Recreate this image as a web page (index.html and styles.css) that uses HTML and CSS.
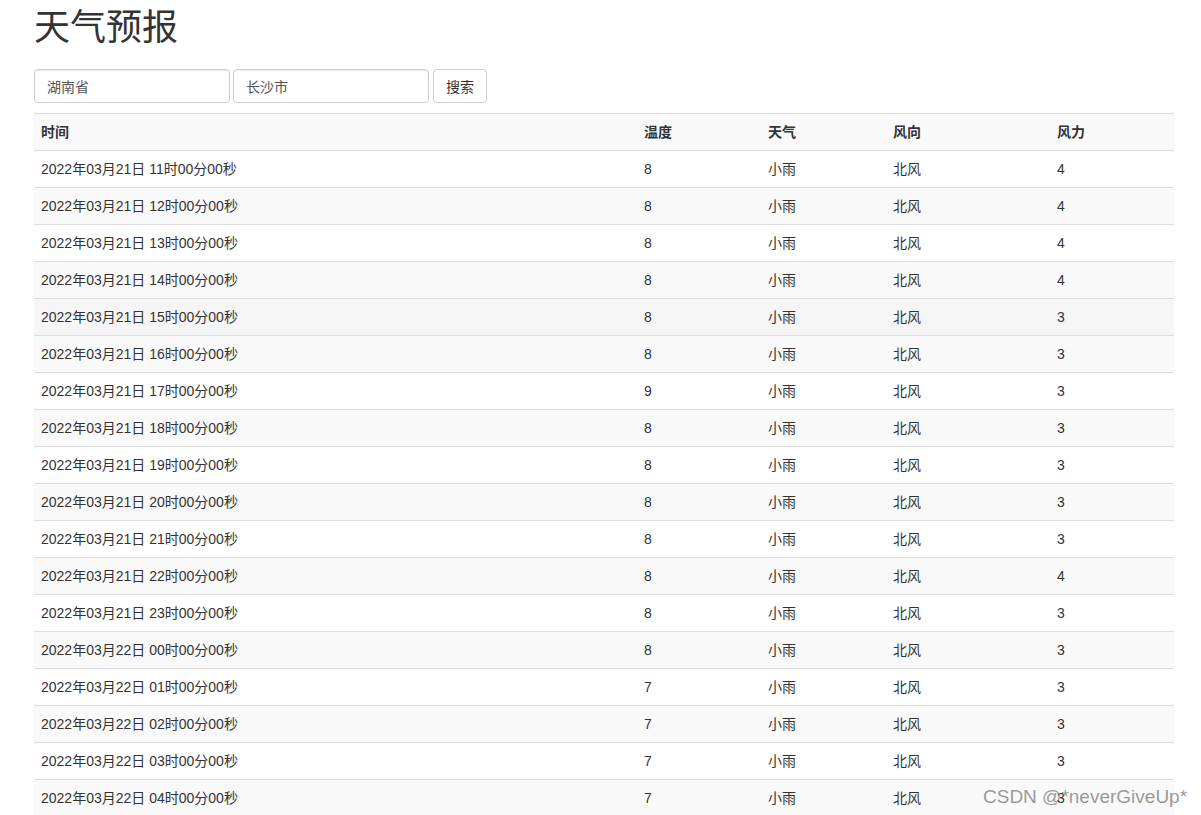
FILE: index.html
```html
<!DOCTYPE html>
<html lang="zh">
<head>
<meta charset="utf-8">
<title>天气预报</title>
<link rel="stylesheet" href="styles.css">
</head>
<body>
<div class="container">
  <h1 class="title">天气预报</h1>
  <div class="search">
    <input class="field" type="text" value="湖南省">
    <input class="field" type="text" value="长沙市">
    <button class="btn" type="button">搜索</button>
  </div>
  <table class="table">
    <colgroup>
      <col class="c-time"><col class="c-temp"><col class="c-weather"><col class="c-dir"><col class="c-power">
    </colgroup>
    <tbody>
      <tr class="head"><th>时间</th><th>温度</th><th>天气</th><th>风向</th><th>风力</th></tr>
      <tr><td>2022年03月21日 11时00分00秒</td><td>8</td><td>小雨</td><td>北风</td><td>4</td></tr>
      <tr><td>2022年03月21日 12时00分00秒</td><td>8</td><td>小雨</td><td>北风</td><td>4</td></tr>
      <tr><td>2022年03月21日 13时00分00秒</td><td>8</td><td>小雨</td><td>北风</td><td>4</td></tr>
      <tr><td>2022年03月21日 14时00分00秒</td><td>8</td><td>小雨</td><td>北风</td><td>4</td></tr>
      <tr class="hover"><td>2022年03月21日 15时00分00秒</td><td>8</td><td>小雨</td><td>北风</td><td>3</td></tr>
      <tr><td>2022年03月21日 16时00分00秒</td><td>8</td><td>小雨</td><td>北风</td><td>3</td></tr>
      <tr><td>2022年03月21日 17时00分00秒</td><td>9</td><td>小雨</td><td>北风</td><td>3</td></tr>
      <tr><td>2022年03月21日 18时00分00秒</td><td>8</td><td>小雨</td><td>北风</td><td>3</td></tr>
      <tr><td>2022年03月21日 19时00分00秒</td><td>8</td><td>小雨</td><td>北风</td><td>3</td></tr>
      <tr><td>2022年03月21日 20时00分00秒</td><td>8</td><td>小雨</td><td>北风</td><td>3</td></tr>
      <tr><td>2022年03月21日 21时00分00秒</td><td>8</td><td>小雨</td><td>北风</td><td>3</td></tr>
      <tr><td>2022年03月21日 22时00分00秒</td><td>8</td><td>小雨</td><td>北风</td><td>4</td></tr>
      <tr><td>2022年03月21日 23时00分00秒</td><td>8</td><td>小雨</td><td>北风</td><td>3</td></tr>
      <tr><td>2022年03月22日 00时00分00秒</td><td>8</td><td>小雨</td><td>北风</td><td>3</td></tr>
      <tr><td>2022年03月22日 01时00分00秒</td><td>7</td><td>小雨</td><td>北风</td><td>3</td></tr>
      <tr><td>2022年03月22日 02时00分00秒</td><td>7</td><td>小雨</td><td>北风</td><td>3</td></tr>
      <tr><td>2022年03月22日 03时00分00秒</td><td>7</td><td>小雨</td><td>北风</td><td>3</td></tr>
      <tr><td>2022年03月22日 04时00分00秒</td><td>7</td><td>小雨</td><td>北风</td><td>3</td></tr>
    </tbody>
  </table>
</div>
<div class="watermark">CSDN @*neverGiveUp*</div>
</body>
</html>
```
FILE: styles.css
```css
html, body {
  margin: 0;
  padding: 0;
  background: #fff;
}
body {
  font-family: "Liberation Sans", Arial, "Noto Sans CJK SC", sans-serif;
  font-size: 14px;
  line-height: 20px;
  color: #333;
  overflow: hidden;
}
.container {
  width: 1140px;
  margin-left: 34px;
}
.title {
  font-size: 36px;
  font-weight: 400;
  line-height: 40px;
  margin: 8px 0 21px;
  color: #333;
}
.search {
  display: flex;
  gap: 3px;
  align-items: center;
}
.field {
  box-sizing: border-box;
  width: 196px;
  height: 34px;
  padding: 6px 12px;
  border: 1px solid #ccc;
  border-radius: 4px;
  font-family: inherit;
  font-size: 14px;
  color: #555;
  background: #fff;
  box-shadow: inset 0 1px 1px rgba(0,0,0,.075);
  outline: none;
}
.btn {
  box-sizing: border-box;
  height: 34px;
  width: 54px;
  margin-left: 1px;
  padding: 6px 12px;
  border: 1px solid #ccc;
  border-radius: 4px;
  background: #fff;
  font-family: inherit;
  font-size: 14px;
  color: #333;
}
.table {
  width: 1140px;
  margin-top: 10px;
  border-collapse: collapse;
  border-spacing: 0;
  table-layout: fixed;
}
.c-time { width: 603px; }
.c-temp { width: 124px; }
.c-weather { width: 125px; }
.c-dir { width: 164px; }
.c-power { width: 124px; }
.table th, .table td {
  padding: 8px 7px;
  line-height: 20px;
  text-align: left;
  vertical-align: top;
  border-top: 1px solid #ddd;
  white-space: nowrap;
}
.table th {
  font-weight: bold;
}
.table tr:nth-child(odd) {
  background: #f9f9f9;
}
.table tr.hover {
  background: #f5f5f5;
}
.watermark {
  position: absolute;
  left: 983px;
  top: 785px;
  font-family: "Liberation Sans", Arial, sans-serif;
  font-size: 19px;
  line-height: 24px;
  color: rgba(120,120,120,0.75);
  white-space: nowrap;
}
```
